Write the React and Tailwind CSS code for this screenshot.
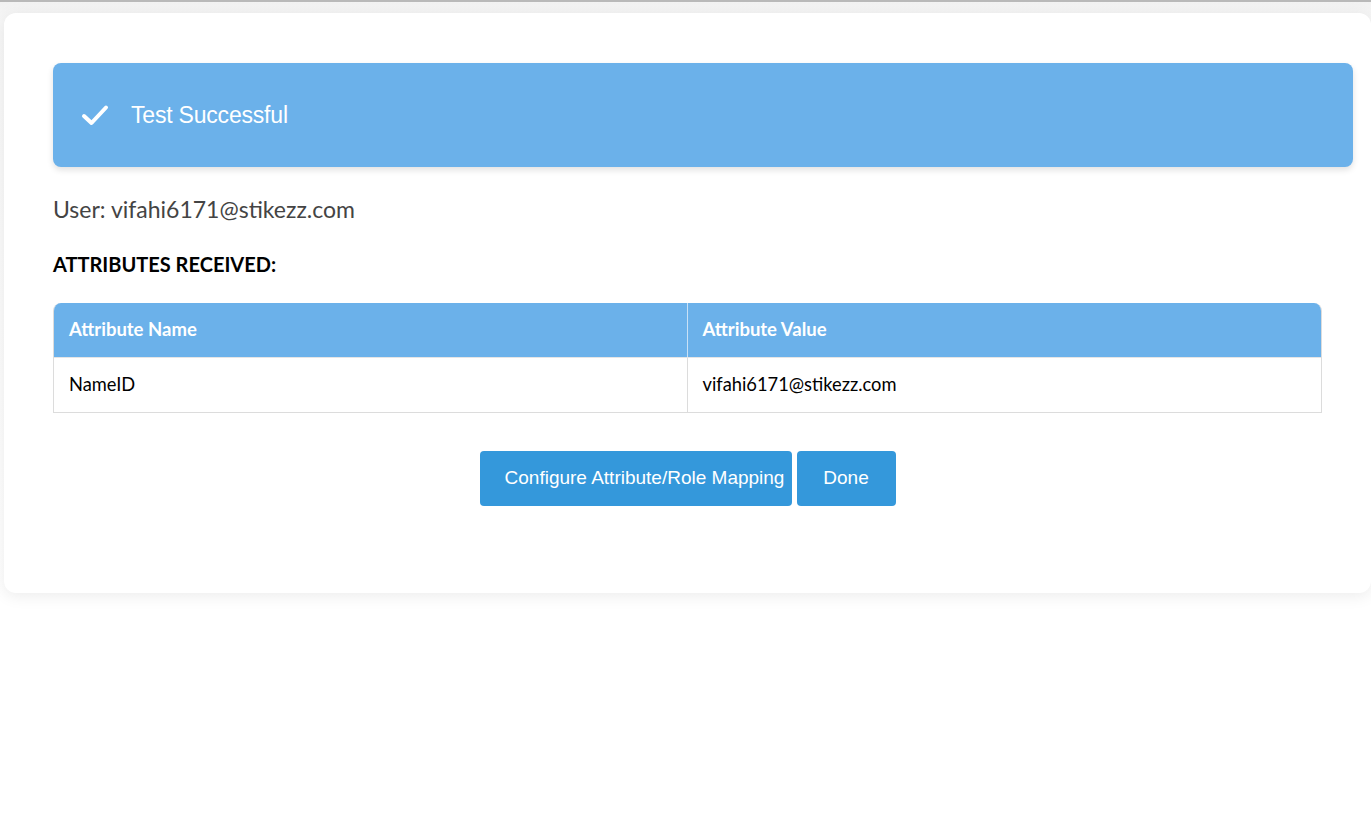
import React from "react";

export default function App() {
  return (
    <div className="min-h-[833px] w-full bg-white overflow-hidden border-t-2 border-[#b9b9b9]">
      <div className="pt-[11px] pl-[4px] bg-[linear-gradient(to_bottom,#f2f2f2_0px,#f7f7f7_20px,#ffffff_600px)]">
        <div className="w-[1367px] bg-white rounded-[12px] shadow-[0_3px_16px_rgba(0,0,0,0.08)] pt-[50px] pb-[87px] pl-[49px] pr-[45px]">
          <div className="w-[1300px] h-[104px] bg-[#6bb1ea] rounded-[8px] shadow-[0_3px_6px_rgba(0,0,0,0.12)] flex items-center pl-[28px]">
            <svg width="28" height="24" viewBox="0 0 28 24" className="mr-[22px]">
              <path d="M3 13 L10.5 20 L25 4.5" fill="none" stroke="#fff" strokeWidth="4" strokeLinecap="round" strokeLinejoin="round" />
            </svg>
            <span className="text-white text-[23px] font-['Liberation_Sans',Arial,sans-serif] tracking-[-0.2px]">Test Successful</span>
          </div>
          <div className="w-[1269px]">
            <div className="mt-[28px] text-[23px] leading-[28px] text-[#444] font-['Lato','Open_Sans',sans-serif]">
              User: vifahi6171@stikezz.com
            </div>
            <div className="mt-[29px] text-[20px] leading-[24px] font-bold text-black font-['Lato','Open_Sans',sans-serif]">
              ATTRIBUTES RECEIVED:
            </div>
            <div className="mt-[27px] rounded-t-[8px] overflow-hidden border-x border-b border-[#dcdcdc] font-['Lato','Open_Sans',sans-serif]">
              <div className="grid grid-cols-2 bg-[#6bb1ea] h-[54px] text-white font-bold text-[18.5px]">
                <div className="flex items-center pl-[15px] border-r border-[#c9e1f6]">Attribute Name</div>
                <div className="flex items-center pl-[15px]">Attribute Value</div>
              </div>
              <div className="grid grid-cols-2 h-[55px] text-[18.3px] text-black bg-white border-t border-[#e5e5e5]">
                <div className="flex items-center pl-[15px] border-r border-[#dcdcdc]">NameID</div>
                <div className="flex items-center pl-[15px]">vifahi6171@stikezz.com</div>
              </div>
            </div>
            <div className="mt-[38px] flex justify-center gap-[5px] font-['Liberation_Sans',Arial,sans-serif] text-[19px] text-white">
              <button className="h-[55px] w-[312px] bg-[#3498db] rounded-[4px] pl-[18px]">Configure Attribute/Role Mapping</button>
              <button className="h-[55px] w-[99px] bg-[#3498db] rounded-[4px]">Done</button>
            </div>
          </div>
        </div>
        <div className="h-[240px]"></div>
      </div>
    </div>
  );
}
